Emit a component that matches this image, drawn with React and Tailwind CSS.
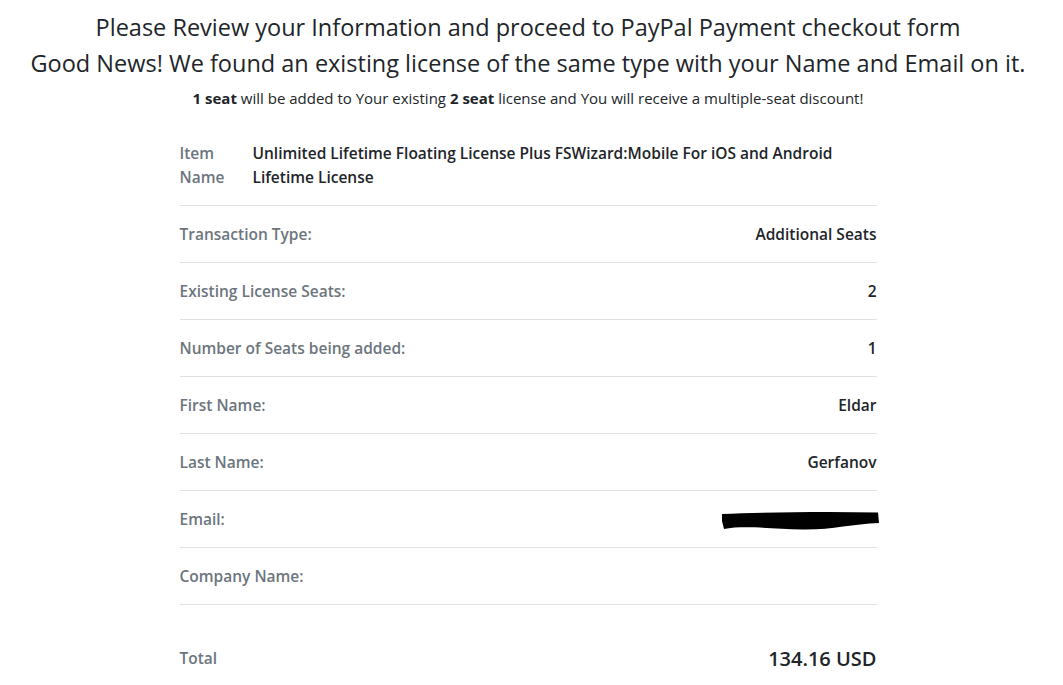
import React from "react";

const rows = [
  ["Transaction Type:", "Additional Seats"],
  ["Existing License Seats:", "2"],
  ["Number of Seats being added:", "1"],
  ["First Name:", "Eldar"],
  ["Last Name:", "Gerfanov"],
  ["Email:", "__EMAIL__"],
  ["Company Name:", ""],
];

function Redacted() {
  return (
    <svg width="157" height="20" viewBox="0 0 157 20" className="block -mr-[2px] mt-[3px]">
      <path
        d="M0 3 C40 1.5, 100 0, 156 1.5 L157 12 C130 13, 110 19, 80 18.5 C50 17.5, 20 14.5, 2 18 L0 10 Z"
        fill="#000"
      />
    </svg>
  );
}

export default function App() {
  return (
    <div
      className="bg-white text-[#212529] pr-[7px] pb-10"
      style={{ fontFamily: '"Open Sans", "Noto Sans", sans-serif' }}
    >
      <div className="pt-[9px] text-center">
        <h1 className="text-[23.5px] leading-[36px] font-medium">
          Please Review your Information and proceed to PayPal Payment checkout form
        </h1>
        <h2 className="text-[23.5px] leading-[36px] font-medium">
          Good News! We found an existing license of the same type with your Name and Email on it.
        </h2>
        <p className="text-[15px] leading-[21px] mt-[7px]">
          <b className="font-bold">1 seat</b> will be added to Your existing{" "}
          <b className="font-bold">2 seat</b> license and You will receive a multiple-seat discount!
        </p>
      </div>

      <div className="w-[697px] mx-auto mt-[16px] text-[15.5px]">
        <div className="flex pt-4 pb-4 border-b border-[#dee2e6] leading-6">
          <div className="w-[73px] font-semibold text-[#6c757d]">Item Name</div>
          <div className="font-semibold">
            Unlimited Lifetime Floating License Plus FSWizard:Mobile For iOS and Android
            <br />
            Lifetime License
          </div>
        </div>
        {rows.map(([label, value]) => (
          <div
            key={label}
            className="flex items-center justify-between h-[57px] border-b border-[#dee2e6] leading-6"
          >
            <div className="font-semibold text-[#6c757d]">{label}</div>
            <div className="font-semibold">
              {value === "__EMAIL__" ? <Redacted /> : value}
            </div>
          </div>
        ))}
        <div className="flex items-center justify-between mt-[40px] h-[28px]">
          <div className="font-semibold text-[#6c757d]">Total</div>
          <div className="font-semibold text-[20px]">134.16 USD</div>
        </div>
      </div>
    </div>
  );
}
